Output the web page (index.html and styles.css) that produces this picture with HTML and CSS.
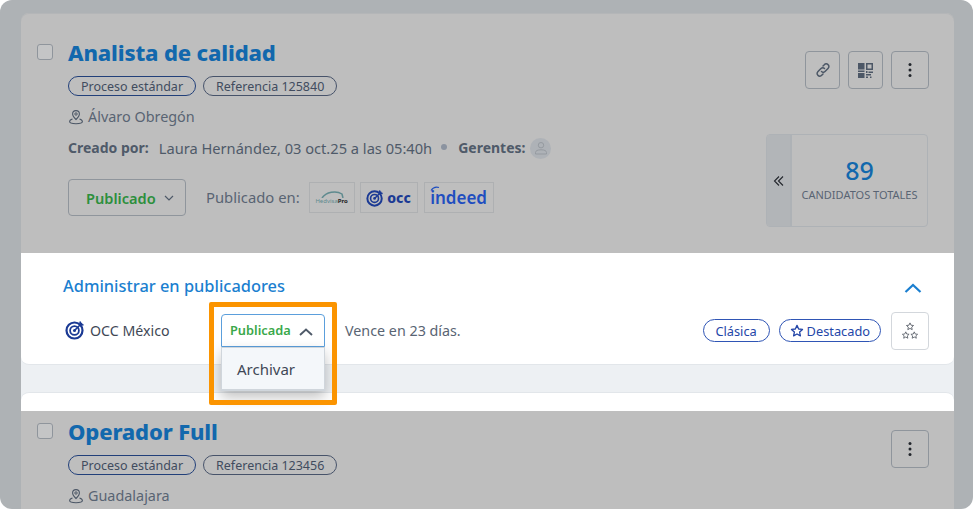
FILE: index.html
```html
<!DOCTYPE html>
<html lang="en">
<head>
    <meta charset="UTF-8">
    <title>Administrar en publicadores</title>
    <link rel="stylesheet" href="styles.css">
</head>
<body>
<svg width="0" height="0" class="defs">
    <symbol id="target" viewBox="0 0 20 20">
        <circle cx="9.5" cy="10.5" r="8" fill="none" stroke="currentColor" stroke-width="2.2"/>
        <circle cx="9.5" cy="10.5" r="4.4" fill="none" stroke="currentColor" stroke-width="1.8"/>
        <circle cx="9.5" cy="10.5" r="1.5" fill="currentColor"/>
        <path d="M9.5 10.5 L17 3 M15 1.5 L15.5 4.5 L18.5 5" fill="none" stroke="currentColor" stroke-width="1.6"/>
    </symbol>
    <symbol id="pin" viewBox="0 0 16 16">
        <path d="M8 10.5 C6 8.5 4.6 6.9 4.6 5 A3.4 3.4 0 0 1 11.4 5 C11.4 6.9 10 8.5 8 10.5 Z" fill="none" stroke="currentColor" stroke-width="1.1"/>
        <circle cx="8" cy="5" r="1.2" fill="none" stroke="currentColor" stroke-width="1"/>
        <path d="M4.5 10 C2.5 10.6 1.6 11.4 1.6 12.6 C1.6 14 4 14.8 8 14.8 C12 14.8 14.4 14 14.4 12.6 C14.4 11.4 13.5 10.6 11.5 10" fill="none" stroke="currentColor" stroke-width="1.1"/>
    </symbol>
    <symbol id="star" viewBox="0 0 16 16">
        <path d="M8 1.6 L9.9 5.7 L14.3 6.2 L11 9.2 L11.9 13.6 L8 11.4 L4.1 13.6 L5 9.2 L1.7 6.2 L6.1 5.7 Z" fill="none" stroke="currentColor" stroke-width="1.5" stroke-linejoin="round"/>
    </symbol>
    <symbol id="dots" viewBox="0 0 4 16">
        <circle cx="2" cy="2.5" r="1.5" fill="currentColor"/>
        <circle cx="2" cy="8" r="1.5" fill="currentColor"/>
        <circle cx="2" cy="13.5" r="1.5" fill="currentColor"/>
    </symbol>
</svg>

<div class="frame">
    <section class="card dim first">
        <div class="card-main">
            <span class="check"></span>
            <h2 class="title">Analista de calidad</h2>
            <div class="tags">
                <span class="tag strong">Proceso estándar</span>
                <span class="tag">Referencia 125840</span>
            </div>
            <p class="place"><svg class="pin"><use href="#pin"/></svg>Álvaro Obregón</p>
            <p class="created">
                <b>Creado por:</b>
                <span class="by">Laura Hernández, 03 oct.25 a las 05:40h</span>
                <i class="dot"></i>
                <b>Gerentes:</b>
                <span class="avatar">
                    <svg width="14" height="14" viewBox="0 0 14 14"><circle cx="7" cy="4.2" r="2.7" fill="none" stroke="currentColor"/><path d="M1.5 13 V11.5 C1.5 9.8 3.5 8.8 7 8.8 C10.5 8.8 12.5 9.8 12.5 11.5 V13 Z" fill="none" stroke="currentColor"/></svg>
                </span>
            </p>
            <div class="publish">
                <button class="status">Publicado
                    <svg width="10" height="6" viewBox="0 0 10 6"><path d="M1 1 L5 5 L9 1" fill="none" stroke="currentColor" stroke-width="1.2"/></svg>
                </button>
                <span class="pub-label">Publicado en:</span>
                <span class="logo logo-hv">
                    <svg width="28" height="7" viewBox="0 0 28 7"><path d="M4 7 C8 1 18 -1 24 3 L25 7" fill="none" stroke="#5e8a8e" stroke-width="1.5"/></svg>
                    <span class="hv-name">Hedvisa<b>Pro</b></span>
                </span>
                <span class="logo logo-occ"><svg class="occ-mark"><use href="#target"/></svg><b>occ</b></span>
                <span class="logo logo-indeed">
                    <svg class="indeed-arc" width="10" height="5" viewBox="0 0 10 5"><path d="M1 4.5 C3 1.5 6 0.5 9 1.5" fill="none" stroke="currentColor" stroke-width="1.1"/></svg>
                    indeed
                </span>
            </div>
        </div>
        <div class="card-side">
            <div class="actions">
                <button class="icon-btn">
                    <svg width="18" height="18" viewBox="0 0 18 18" fill="none" stroke="currentColor" stroke-width="1.5" stroke-linecap="round"><path d="M7.5 10.5 C8.5 11.5 10 11.5 11 10.5 L14 7.5 C15.2 6.3 15.2 4.6 14 3.6 C13 2.6 11.3 2.6 10.3 3.7 L9 5"/><path d="M10.5 7.5 C9.5 6.5 8 6.5 7 7.5 L4 10.5 C2.8 11.7 2.8 13.4 4 14.4 C5 15.4 6.7 15.4 7.7 14.3 L9 13"/></svg>
                </button>
                <button class="icon-btn">
                    <svg width="15" height="15" viewBox="0 0 15 15" fill="currentColor"><path d="M0 0 H6.5 V6.5 H0 Z M8 0 H15 V7 H8 Z M9.5 1.5 V5.5 H13.5 V1.5 Z M0 7.5 H6.5 V9 H0 Z M0 10 H6.5 V15 H0 Z M8 8 H9.5 V10 H8 Z M10.5 8.5 H15 V10 H10.5 Z M8 11 H13 V12.5 H8 Z M8 13.5 H10 V15 H8 Z M12 13.5 H13.5 V15 H12 Z"/></svg>
                </button>
                <button class="icon-btn wide"><svg width="4" height="16"><use href="#dots"/></svg></button>
            </div>
            <div class="stats">
                <span class="stats-toggle">
                    <svg width="12" height="12" viewBox="0 0 12 12" fill="none" stroke="currentColor" stroke-width="1.1"><path d="M6 1.5 L1.5 6 L6 10.5 M10 1.5 L5.5 6 L10 10.5"/></svg>
                </span>
                <div class="stats-body">
                    <strong>89</strong>
                    <span>CANDIDATOS TOTALES</span>
                </div>
            </div>
        </div>
    </section>

    <div class="middle">
        <section class="panel">
            <div class="panel-head">
                <h3>Administrar en publicadores</h3>
                <svg width="18" height="10" viewBox="0 0 18 10"><path d="M1.5 9 L9 2 L16.5 9" fill="none" stroke="currentColor" stroke-width="2.2"/></svg>
            </div>
            <div class="panel-row">
                <span class="board"><svg class="board-mark"><use href="#target"/></svg>OCC México</span>
                <span class="select">Publicada
                    <svg width="14" height="8" viewBox="0 0 14 8"><path d="M1 7 L7 1.5 L13 7" fill="none" stroke="currentColor" stroke-width="1.9"/></svg>
                </span>
                <span class="expires">Vence en 23 días.</span>
                <div class="panel-tags">
                    <span class="pill plain">Clásica</span>
                    <span class="pill"><svg class="pill-star"><use href="#star"/></svg>Destacado</span>
                    <button class="icon-btn light">
                        <svg width="18" height="18" viewBox="0 0 18 18"><use href="#star" x="4.5" y="0" width="9" height="9"/><use href="#star" x="0.5" y="9" width="8.5" height="8.5"/><use href="#star" x="9" y="9" width="8.5" height="8.5"/></svg>
                    </button>
                </div>
            </div>
            <div class="menu">Archivar</div>
            <div class="highlight"></div>
        </section>
        <div class="strip"></div>
    </div>

    <section class="card dim second">
        <div class="card-main">
            <span class="check"></span>
            <h2 class="title">Operador Full</h2>
            <div class="tags">
                <span class="tag strong">Proceso estándar</span>
                <span class="tag">Referencia 123456</span>
            </div>
            <p class="place"><svg class="pin"><use href="#pin"/></svg>Guadalajara</p>
        </div>
        <div class="card-side">
            <div class="actions">
                <button class="icon-btn wide"><svg width="4" height="16"><use href="#dots"/></svg></button>
            </div>
        </div>
    </section>
</div>
</body>
</html>
```

FILE: styles.css
```css
* {
    box-sizing: border-box;
}
body {
    margin: 0;
    background: #fff;
    font-family: "Noto Sans", Arial, sans-serif;
}
.defs {
    position: absolute;
}
p, h2, h3 {
    margin: 0;
}
button {
    font-family: inherit;
    padding: 0;
    background: none;
}
.frame {
    width: 973px;
    height: 509px;
    padding: 13px 19px 0 21px;
    background: #aeb2b5;
    border-radius: 12px;
    overflow: hidden;
}
.card {
    display: flex;
    justify-content: space-between;
    background: #bebebe;
    padding: 25px 25px 0 47px;
}
.first {
    height: 240px;
    border-radius: 8px 8px 0 0;
    box-shadow: inset 0 1px 0 #b4b6b8;
}
.second {
    height: 98px;
    padding-top: 6px;
}
.card-main {
    position: relative;
}
.check {
    position: absolute;
    left: -31px;
    top: 6px;
    width: 16px;
    height: 16px;
    border: 1px solid #8f959c;
    border-radius: 3px;
    background: #c4c5c6;
}
.title {
    margin-top: -1px;
    font-size: 22px;
    line-height: 30px;
    font-weight: 800;
    letter-spacing: -0.15px;
    color: #1268ad;
}
.tags {
    display: flex;
    gap: 7px;
    margin-top: 9px;
}
.tag {
    height: 20px;
    padding: 0 12px;
    border: 1px solid #47536a;
    border-radius: 10px;
    font-size: 12.5px;
    line-height: 19px;
    color: #414c5e;
}
.tag.strong {
    border-color: #22407a;
}
.place {
    display: flex;
    align-items: center;
    gap: 4px;
    margin-top: 9px;
    font-size: 14.4px;
    line-height: 24px;
    color: #596473;
}
.pin {
    width: 16px;
    height: 16px;
    color: #4c5766;
}
.created {
    display: flex;
    align-items: center;
    margin-top: 7px;
    font-size: 14px;
    line-height: 24px;
    color: #4f5a69;
}
.by {
    margin-left: 10px;
    font-size: 14.65px;
}
.dot {
    width: 6px;
    height: 6px;
    margin: 0 11px 2px 9px;
    border-radius: 50%;
    background: #8b93a0;
}
.avatar {
    display: flex;
    align-items: center;
    justify-content: center;
    width: 21px;
    height: 21px;
    margin-left: 5px;
    border-radius: 50%;
    background: #aeb2b7;
    color: #959aa0;
}
.publish {
    display: flex;
    align-items: center;
    margin-top: 19px;
}
.status {
    display: flex;
    align-items: center;
    gap: 8px;
    width: 118px;
    height: 37px;
    padding-left: 17px;
    border: 1px solid #8f959c;
    border-radius: 4px;
    font-size: 14.6px;
    font-weight: 600;
    color: #2c8f3c;
}
.status svg {
    color: #4f5a69;
}
.pub-label {
    margin: 0 9px 2px 20px;
    font-size: 14.8px;
    color: #596473;
}
.logo {
    display: flex;
    align-items: center;
    justify-content: center;
    height: 31px;
    margin-right: 5px;
    border: 1px solid #aeb0b2;
}
.logo-hv {
    flex-direction: column;
    width: 46px;
    line-height: 1;
}
.hv-name {
    font-size: 6px;
    color: #5e8a8e;
}
.hv-name b {
    color: #222;
}
.logo-occ {
    gap: 3px;
    width: 58px;
    margin-right: 6px;
    color: #1b3a94;
    font-size: 14px;
}
.logo-occ b {
    font-weight: 800;
}
.occ-mark {
    width: 18px;
    height: 18px;
}
.logo-indeed {
    position: relative;
    width: 70px;
    font-size: 17px;
    font-weight: 600;
    color: #1f4ec0;
}
.indeed-arc {
    position: absolute;
    left: 5px;
    top: 3px;
}
.card-side {
    display: flex;
    flex-direction: column;
    align-items: flex-end;
}
.actions {
    display: flex;
    gap: 8px;
    margin-top: 13px;
}
.icon-btn {
    display: flex;
    align-items: center;
    justify-content: center;
    width: 35px;
    height: 38px;
    border: 1px solid #8f959c;
    border-radius: 4px;
    color: #4c5766;
}
.icon-btn.wide {
    width: 38px;
    color: #22262c;
}
.icon-btn.light {
    width: 38px;
    background: #fff;
    border-color: #d3d7dc;
    color: #4f5560;
}
.stats {
    display: flex;
    width: 162px;
    height: 93px;
    margin: 45px 1px 0 0;
    border: 1px solid #aeb2b6;
    border-radius: 4px;
    overflow: hidden;
}
.stats-toggle {
    display: flex;
    align-items: center;
    justify-content: center;
    width: 25px;
    background: #b2b5b8;
    border-right: 2px solid #aeb2b6;
    color: #22262c;
}
.stats-body {
    flex: 1;
    display: flex;
    flex-direction: column;
    align-items: center;
    padding-top: 20px;
}
.stats-body strong {
    font-size: 25px;
    line-height: 30px;
    font-weight: 500;
    color: #1268ad;
}
.stats-body span {
    margin-top: 2px;
    font-size: 11px;
    line-height: 16px;
    white-space: nowrap;
    color: #596473;
}
.middle {
    background: #edf0f3;
}
.panel {
    position: relative;
    height: 112px;
    padding: 20px 25px 0 42px;
    background: #fff;
    border-bottom: 1px solid #e2e6ea;
    border-radius: 0 0 8px 8px;
}
.panel-head {
    display: flex;
    align-items: center;
    justify-content: space-between;
    height: 26px;
    padding-right: 7px;
    color: #1b7fd0;
}
.panel-head h3 {
    padding-bottom: 2px;
    font-size: 16.4px;
    font-weight: 500;
    color: #1b7fd0;
}
.panel-head svg {
    margin-top: 4px;
}
.panel-row {
    display: flex;
    align-items: center;
    height: 37px;
    margin-top: 13px;
}
.board {
    display: flex;
    align-items: center;
    gap: 5px;
    width: 158px;
    padding: 0 0 1px 2px;
    font-size: 14.2px;
    color: #3f4856;
}
.board-mark {
    width: 20px;
    height: 20px;
    color: #1b3a94;
}
.select {
    display: flex;
    align-items: center;
    justify-content: space-between;
    width: 104px;
    height: 33px;
    padding: 0 11px 1px 8px;
    border: 1px solid #5b9fdc;
    border-radius: 4px 4px 0 0;
    font-size: 12.8px;
    font-weight: 600;
    color: #3aa84a;
}
.select svg {
    margin-top: 3px;
    color: #4f5a69;
}
.expires {
    margin: 0 0 1px 20px;
    font-size: 14.3px;
    color: #596473;
}
.panel-tags {
    display: flex;
    align-items: center;
    gap: 9px;
    margin-left: auto;
}
.pill {
    display: flex;
    align-items: center;
    gap: 3px;
    height: 23px;
    padding: 0 10px;
    border: 1px solid #2f55b5;
    border-radius: 12px;
    font-size: 12.8px;
    color: #2446a8;
}
.pill.plain {
    width: 67px;
    justify-content: center;
    padding: 0;
}
.pill-star {
    width: 14px;
    height: 14px;
}
.panel-tags .icon-btn {
    margin-left: 1px;
}
.menu {
    position: absolute;
    left: 200px;
    top: 94px;
    width: 104px;
    height: 44px;
    padding-left: 15px;
    background: #f4f7fa;
    border: 1px solid #d0d6dc;
    border-bottom-width: 2px;
    box-shadow: 0 6px 14px rgba(0, 0, 0, 0.25);
    font-size: 15px;
    line-height: 42px;
    color: #3f4856;
    z-index: 2;
}
.highlight {
    position: absolute;
    left: 188px;
    top: 49px;
    width: 128px;
    height: 103px;
    border: 5px solid #fb9400;
    border-radius: 2px;
    z-index: 3;
}
.strip {
    height: 19px;
    margin-top: 27px;
    background: #fff;
    border-top: 1px solid #e2e6ea;
    border-radius: 8px 8px 0 0;
}
```
